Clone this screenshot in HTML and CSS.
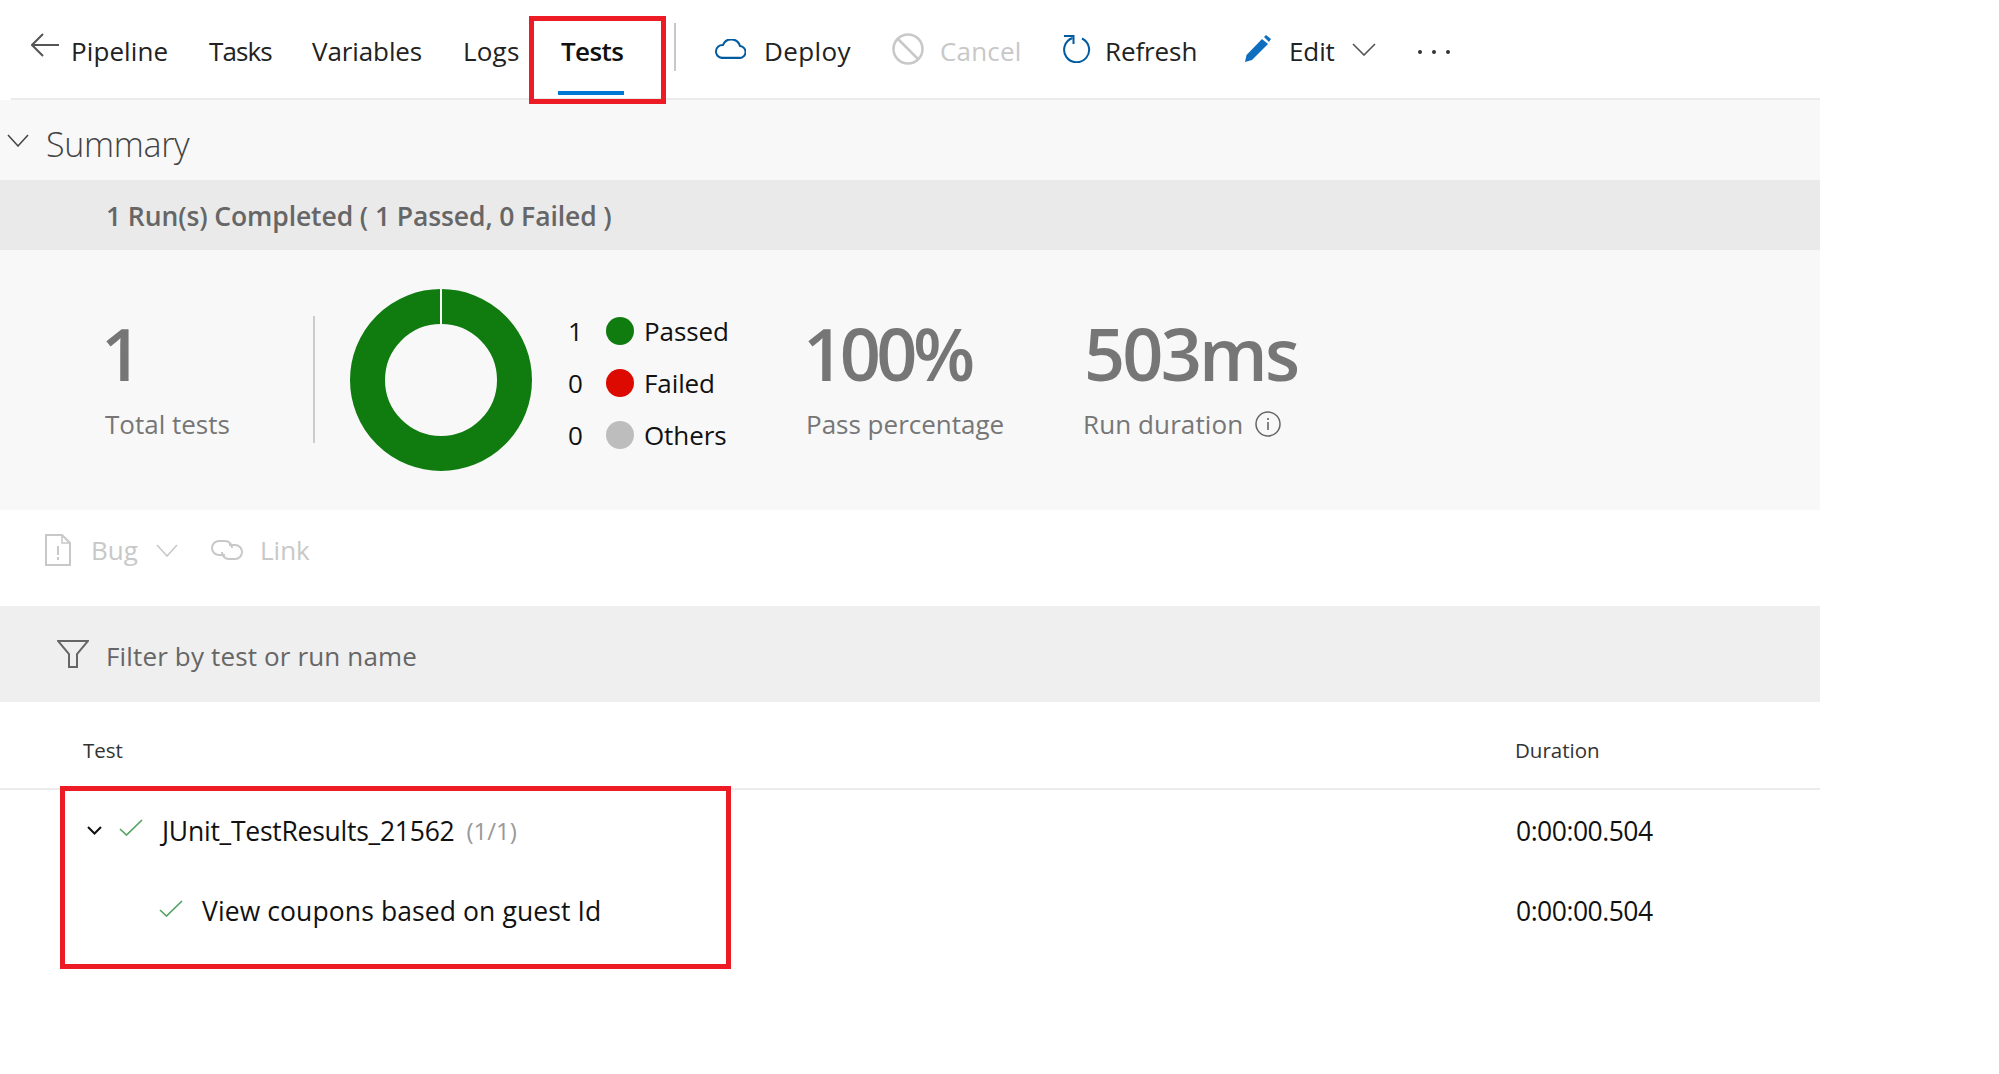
FILE: index.html
```html
<!DOCTYPE html>
<html lang="en">
<head>
	<meta charset="UTF-8"/>
	<title>Pipeline - Tests</title>
	<link rel="stylesheet" href="styles.css">
</head>
<body>

<main class="page">
	<header class="topbar">
		<svg class="ico-back" viewBox="0 0 28 24" width="28" height="24"><path d="M28 12H1M12 1 1 12l11 11" fill="none" stroke="#555" stroke-width="2"/></svg>
		<a class="nav nav-pipeline">Pipeline</a>
		<a class="nav nav-tasks">Tasks</a>
		<a class="nav nav-variables">Variables</a>
		<a class="nav nav-logs">Logs</a>
		<a class="nav nav-tests">Tests</a>
		<span class="sep"></span>
		<svg class="ico-cloud" viewBox="0 0 32 20" width="32" height="20"><path d="M8 19H25a6 6 0 0 0 1-12A9 9 0 0 0 9 6 6.500 6.500 0 0 0 8 19Z" fill="none" stroke="#005ba1" stroke-width="2"/><path d="M7 19H26" stroke="#005ba1" stroke-width="2.500"/></svg>
		<a class="act act-deploy">Deploy</a>
		<svg class="ico-cancel" viewBox="0 0 32 32" width="32" height="32"><circle cx="16" cy="16" r="14.500" fill="none" stroke="#c8c8c8" stroke-width="2.500"/><path d="M6 6 26 26" stroke="#c8c8c8" stroke-width="2.500"/></svg>
		<a class="act act-cancel">Cancel</a>
		<svg class="ico-refresh" viewBox="0 0 28 28" width="28" height="28"><path d="M19 3.500a12.500 12.500 0 1 1-9.500-.5" fill="none" stroke="#005ba1" stroke-width="2"/><path d="M1 1H10.500V9" fill="none" stroke="#005ba1" stroke-width="2"/></svg>
		<a class="act act-refresh">Refresh</a>
		<svg class="ico-edit" viewBox="0 0 28 28" width="28" height="28"><path d="M1 27 2.500 20 18 4l6 5L8 25Z" fill="#106ebe"/><path d="M20 2 22 0l5 4-2 3Z" fill="#106ebe"/></svg>
		<a class="act act-edit">Edit</a>
		<svg class="ico-chev" viewBox="0 0 24 13" width="24" height="13"><path d="M1 1 12 12 23 1" fill="none" stroke="#555" stroke-width="1.600"/></svg>
		<span class="more"><i></i><i></i><i></i></span>
	</header>

	<section class="summary-head">
		<svg class="ico-summary" viewBox="0 0 22 13" width="22" height="13"><path d="M1 1 11 12 21 1" fill="none" stroke="#444" stroke-width="1.500"/></svg>
		<h2 class="summary-title">Summary</h2>
	</section>
	<div class="run-band">1 Run(s) Completed ( 1 Passed, 0 Failed )</div>

	<section class="stats">
		<div class="stat stat-total">
			<div class="stat-num">1</div>
			<div class="stat-label">Total tests</div>
		</div>
		<span class="stat-sep"></span>
		<svg class="donut" viewBox="0 0 182 182" width="182" height="182">
			<circle cx="91" cy="91" r="73.500" fill="none" stroke="#107c10" stroke-width="35"/>
			<path d="M91 0V36" stroke="#f8f8f8" stroke-width="2"/>
		</svg>
		<ul class="legend">
			<li><span class="legend-n">1</span><span class="dot dot-pass"></span>Passed</li>
			<li><span class="legend-n">0</span><span class="dot dot-fail"></span>Failed</li>
			<li><span class="legend-n">0</span><span class="dot dot-other"></span>Others</li>
		</ul>
		<div class="stat stat-pass">
			<div class="stat-num">100%</div>
			<div class="stat-label">Pass percentage</div>
		</div>
		<div class="stat stat-dur">
			<div class="stat-num">503ms</div>
			<div class="stat-label">Run duration
				<svg class="ico-info" viewBox="0 0 26 26" width="26" height="26"><circle cx="13" cy="13" r="12" fill="none" stroke="#666" stroke-width="1.500"/><path d="M13 11v8M13 7v2" stroke="#666" stroke-width="1.600"/></svg>
			</div>
		</div>
	</section>

	<div class="bugbar">
		<svg class="ico-bug" viewBox="0 0 26 32" width="26" height="32"><path d="M1 1H17L25 9V31H1Z" fill="none" stroke="#c8c8c8" stroke-width="2"/><path d="M17 1V9H25" fill="none" stroke="#c8c8c8" stroke-width="1.500"/><path d="M13 12v9M13 23v3" stroke="#c8c8c8" stroke-width="2"/></svg>
		<span class="bug-text">Bug</span>
		<svg class="ico-bugchev" viewBox="0 0 22 13" width="22" height="13"><path d="M1 1 11 12 21 1" fill="none" stroke="#c8c8c8" stroke-width="1.600"/></svg>
		<svg class="ico-link" viewBox="0 0 32 20" width="32" height="20"><path d="M14 15H8A7 7 0 0 1 8 1h6a7 7 0 0 1 7 7" fill="none" stroke="#c8c8c8" stroke-width="2"/><path d="M18 5h6a7 7 0 0 1 0 14h-6a7 7 0 0 1-7-7" fill="none" stroke="#c8c8c8" stroke-width="2"/></svg>
		<span class="link-text">Link</span>
	</div>

	<div class="filterbar">
		<svg class="ico-filter" viewBox="0 0 32 28" width="32" height="28"><path d="M1 1H31L20 14V27H12V14Z" fill="none" stroke="#666" stroke-width="2"/></svg>
		<span class="filter-text">Filter by test or run name</span>
	</div>

	<div class="tbl-head">
		<span class="col-test">Test</span>
		<span class="col-dur">Duration</span>
	</div>

	<div class="tbl-row row-run">
		<svg class="ico-expand" viewBox="0 0 15 9" width="15" height="9"><path d="M1 1 7.500 7.500 14 1" fill="none" stroke="#111" stroke-width="2"/></svg>
		<svg class="ico-check" viewBox="0 0 24 17" width="24" height="17"><path d="M1 10 7.500 16 23 1" fill="none" stroke="#55a362" stroke-width="1.700"/></svg>
		<span class="row-name">JUnit_TestResults_21562</span>
		<span class="row-count">(1/1)</span>
		<span class="row-dur">0:00:00.504</span>
	</div>
	<div class="tbl-row row-test">
		<svg class="ico-check" viewBox="0 0 24 17" width="24" height="17"><path d="M1 10 7.500 16 23 1" fill="none" stroke="#55a362" stroke-width="1.700"/></svg>
		<span class="row-name">View coupons based on guest Id</span>
		<span class="row-dur">0:00:00.504</span>
	</div>

	<!-- red annotation boxes drawn on top of the screenshot -->
	<div class="mark mark-tab"></div>
	<div class="mark mark-rows"></div>
</main>

</body>
</html>
```

FILE: styles.css
```css
* {box-sizing: border-box;}
html, body {
	margin: 0;
	background: #fff;
}
body {
	font-family: "Open Sans", "Noto Sans", sans-serif;
	color: #222;
	height: 1074px;
	overflow: hidden;
}
.page {
	position: relative;
	width: 1820px;
}
svg {
	display: block;
	flex: none;
}

/* top bar */
.topbar {
	display: flex;
	align-items: center;
	height: 100px;
	padding: 0 0 0 20px;
	margin-left: 11px;
	border-bottom: 2px solid #ebebeb;
	font-size: 26px;
	letter-spacing: -0.1px;
}
.nav, .act {
	display: block;
	white-space: nowrap;
	margin-top: 4px;
}
.ico-back {margin-top: -8px;}
.nav-pipeline {margin-left: 12px; width: 138px; letter-spacing: 0.1px;}
.nav-tasks {width: 103px; letter-spacing: -0.9px;}
.nav-variables {width: 151px;}
.nav-logs {width: 98px; letter-spacing: 0.2px;}
.nav-tests {width: 113px; font-weight: 600; color: #111; position: relative; letter-spacing: -0.6px;}
.nav-tests::after {
	content: "";
	position: absolute;
	left: -3px;
	width: 66px;
	top: 58px;
	height: 4px;
	background: #0078d4;
}
.sep {
	width: 2px;
	height: 48px;
	background: #c8c8c8;
	margin: -4px 38px 0 0;
}
.act-deploy {margin-left: 18px; width: 128px; letter-spacing: 0.4px;}
.act-cancel {margin-left: 16px; width: 123px; color: #c8c8c8; letter-spacing: 0.2px;}
.act-refresh {margin-left: 14px; width: 139px;}
.act-edit {margin-left: 17px; width: 63px;}
.more {
	display: flex;
	gap: 10px;
	margin: 6px 0 0 42px;
}
.more i {
	width: 4px;
	height: 4px;
	border-radius: 50%;
	background: #333;
}

/* summary */
.summary-head {
	display: flex;
	align-items: center;
	height: 80px;
	background: #f8f8f8;
	padding-left: 7px;
}
.summary-title {
	margin: 7px 0 0 17px;
	font-size: 34px;
	font-weight: 300;
	color: #444;
	letter-spacing: -0.3px;
}
.run-band {
	height: 70px;
	line-height: 72px;
	background: #eaeaea;
	padding-left: 106px;
	font-size: 26.5px;
	font-weight: 600;
	color: #666;
	letter-spacing: -0.1px;
}
.stats {
	display: flex;
	height: 260px;
	background: #f8f8f8;
	padding-left: 105px;
	align-items: flex-start;
}
.stat-num {
	font-size: 72px;
	line-height: 98px;
	margin-top: 54px;
	font-weight: 600;
	color: #767676;
}
.stat-label {
	display: flex;
	align-items: center;
	gap: 12px;
	margin-top: 4px;
	font-size: 26px;
	line-height: 36px;
	color: #767676;
}
.stat-total {width: 208px;}
.stat-total .stat-num {margin-left: -4px;}
.stat-sep {
	width: 2px;
	height: 127px;
	margin-top: 66px;
	background: #ccc;
}
.donut {margin: 39px 0 0 35px;}
.legend {
	list-style: none;
	margin: 55px 0 0 36px;
	padding: 0;
	width: 238px;
	font-size: 26px;
	letter-spacing: -0.1px;
	color: #111;
}
.legend li {
	display: flex;
	align-items: center;
	height: 52px;
}
.legend-n {width: 38px;}
.dot {
	width: 28px;
	height: 28px;
	border-radius: 50%;
	margin-right: 10px;
}
.dot-pass {background: #107c10;}
.dot-fail {background: #dc0a00;}
.dot-other {background: #bdbdbd;}
.stat-pass {width: 277px;}
.stat-pass .stat-num {letter-spacing: -4.500px; margin-left: -3px;}
.stat-dur .stat-num {letter-spacing: -2.800px; margin-left: 1px;}
.stat-dur .stat-label {letter-spacing: 0.1px;}

/* work item bar + filter */
.bugbar {
	display: flex;
	align-items: center;
	height: 96px;
	padding: 0 0 16px 45px;
	font-size: 26px;
	color: #c8c8c8;
}
.bug-text {margin-left: 20px; width: 65px;}
.ico-link {margin-left: 33px;}
.link-text {margin-left: 17px;}
.filterbar {
	display: flex;
	align-items: center;
	height: 96px;
	padding-left: 57px;
	background: #efefef;
	font-size: 26px;
	color: #666;
	letter-spacing: 0.15px;
}
.filter-text {margin: 4px 0 0 17px;}

/* results table */
.tbl-head {
	display: flex;
	align-items: center;
	height: 88px;
	padding: 10px 0 0 83px;
	border-bottom: 2px solid #ebebeb;
	font-size: 20.500px;
	color: #333;
}
.col-test {width: 1432px;}
.tbl-row {
	display: flex;
	align-items: center;
	height: 80px;
	font-size: 26.500px;
	color: #111;
}
.row-run {padding-left: 87px; height: 81px;}
.row-run .ico-check {margin: -6px 0 0 17px;}
.row-run .row-name {margin-left: 19px; letter-spacing: -0.25px;}
.row-count {
	margin-left: 12px;
	font-size: 24px;
	color: #999;
}
.row-dur {letter-spacing: -0.5px;}
.row-run .row-dur {margin-left: auto; width: 304px;}
.row-test {padding-left: 159px;}
.row-test .ico-check {margin-top: -6px;}
.row-test .row-name {margin-left: 19px; letter-spacing: 0.1px;}
.row-test .row-dur {margin-left: auto; width: 304px;}

/* annotations */
.mark {
	position: absolute;
	border: 5px solid #ed1c24;
}
.mark-tab {
	left: 529px;
	top: 16px;
	width: 137px;
	height: 88px;
}
.mark-rows {
	left: 60px;
	top: 786px;
	width: 671px;
	height: 183px;
}
```
